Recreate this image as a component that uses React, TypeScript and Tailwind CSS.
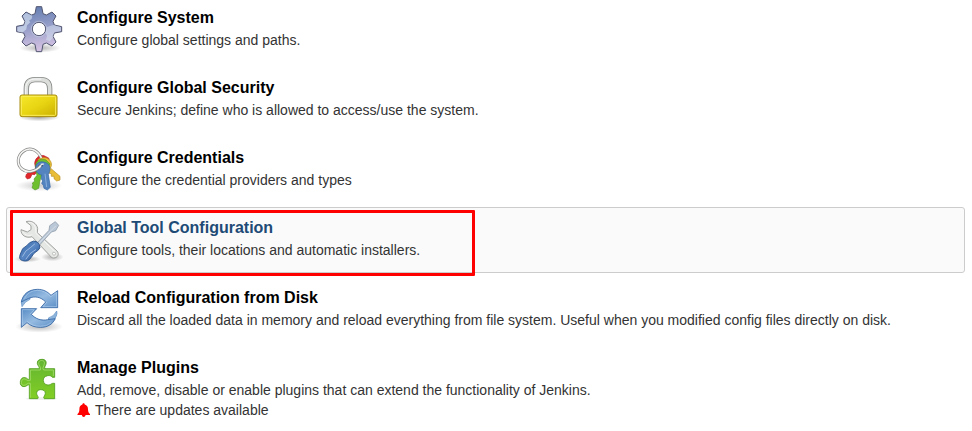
import type { ReactNode } from "react";

function GearIcon() {
  return (
    <svg viewBox="15 15 144 144" className="size-12 shrink-0">
      <defs>
        <linearGradient id="gear" x1="0" y1="0" x2="0.15" y2="1">
          <stop offset="0" stopColor="#5f7aae" />
          <stop offset="0.5" stopColor="#949dc8" />
          <stop offset="1" stopColor="#d3c1e2" />
        </linearGradient>
        <radialGradient id="gearShade">
          <stop offset="0" stopColor="#000" stopOpacity="0.3" />
          <stop offset="1" stopColor="#000" stopOpacity="0" />
        </radialGradient>
        <clipPath id="gearClip">
          <path d="M79 20H95L99 41L109 45L126 36L138 48L129 64L133 75L155 80V95L133 99L129 109L138 126L126 138L109 129L99 133L95 155H79L75 133L65 129L48 138L36 126L45 109L41 99L20 95V79L41 75L45 65L36 48L48 36L65 45L75 41Z" />
        </clipPath>
      </defs>
      <ellipse cx="90" cy="144" rx="62" ry="14" fill="url(#gearShade)" />
      <path fill="url(#gear)" stroke="#50546f" strokeWidth="3" strokeLinejoin="round" d="M79 20H95L99 41L109 45L126 36L138 48L129 64L133 75L155 80V95L133 99L129 109L138 126L126 138L109 129L99 133L95 155H79L75 133L65 129L48 138L36 126L45 109L41 99L20 95V79L41 75L45 65L36 48L48 36L65 45L75 41Z" />
      <g clipPath="url(#gearClip)" fill="#dce8f5">
        <path opacity=".6" d="M22 81L42 77L46 64L38 48L48 38L67 47L65 56L57 62L61 67L51 76L49 88L36 99L22 94Z" />
        <path opacity=".45" d="M111 81L133 74L153 82V93L133 97L128 114L119 124L108 119L111 108L106 96Z" />
      </g>
      <circle cx="87" cy="87" r="23" fill="none" stroke="#cbd3e5" strokeWidth="3" opacity=".6" />
      <circle cx="87" cy="87" r="20" fill="#fff" stroke="#555974" strokeWidth="3" />
    </svg>
  );
}

function LockIcon() {
  return (
    <svg viewBox="15 15 144 144" className="size-12 shrink-0">
      <defs>
        <linearGradient id="lock" x1="0" y1="0" x2="1" y2="1">
          <stop stopColor="#f6e92c" />
          <stop offset=".5" stopColor="#e8d412" />
          <stop offset="1" stopColor="#c9ae00" />
        </linearGradient>
        <radialGradient id="lockShade">
          <stop stopOpacity="0.35" />
          <stop offset="1" stopOpacity="0" />
        </radialGradient>
      </defs>
      <ellipse cx="87" cy="142" rx="62" ry="12" fill="url(#lockShade)" />
      <path d="M49 78V56C49 37 59 29 75 29H93C109 29 119 37 119 56V78" fill="none" stroke="#858885" strokeWidth="16" />
      <path d="M49 78V56C49 37 59 29 75 29H93C109 29 119 37 119 56V78" fill="none" stroke="#dcdedc" strokeWidth="11" />
      <path d="M47 78V56C47 37 59 27 75 27H94" fill="none" stroke="#fafafa" strokeWidth="3" />
      <rect x="30" y="75" width="111" height="65" rx="6" fill="url(#lock)" stroke="#a68c10" strokeWidth="3" />
      <rect x="34" y="79" width="103" height="57" rx="3" fill="none" stroke="#fbed5c" strokeWidth="3" />
    </svg>
  );
}

function KeysIcon() {
  return (
    <svg viewBox="15 15 144 144" className="size-12 shrink-0">
      <defs>
        <radialGradient id="keysShade">
          <stop stopOpacity="0.2" />
          <stop offset="1" stopOpacity="0" />
        </radialGradient>
      </defs>
      <ellipse cx="87" cy="137" rx="70" ry="17" fill="url(#keysShade)" />
      <g strokeWidth="2" strokeLinejoin="round">
        <path fill="#e0282c" stroke="#bb2027" d="M74 70C76 52 88 45 102 47L116 54L120 68L84 92L74 104L66 103L61 114L52 117L47 111L49 103L57 97L68 94L77 86Z" />
        <path fill="#e9bd37" stroke="#b99125" d="M84 59C94 50 109 51 118 59C126 67 126 77 121 84L150 109V120L140 123L132 116V109L124 109V101L115 99L99 84Z" />
        <path fill="#6fc02f" stroke="#56992a" d="M77 75C79 59 96 54 108 60L120 72L105 98L94 107L89 126L86 145L75 150L66 143L69 135L67 129L74 124L72 117L81 106L77 91Z" />
        <path fill="#5384c0" stroke="#3465a4" d="M77 82C78 69 89 64 101 66C114 68 120 77 120 88C119 98 116 101 115 103L121 142L112 150L102 145L100 136L95 130L98 123L94 117L95 105C83 103 76 94 77 82Z" />
        <path d="M105 101L110 141" fill="none" stroke="#89afdc" strokeWidth="3" />
      </g>
      <ellipse cx="92" cy="77" rx="8" ry="5" transform="rotate(-25 92 77)" fill="#38577f" />
      <path d="M94 54C84 31 61 20 43 32C19 47 21 74 36 87C52 101 78 94 92 77" fill="none" stroke="#858785" strokeWidth="9" />
      <path d="M94 54C84 31 61 20 43 32C19 47 21 74 36 87C52 101 78 94 92 77" fill="none" stroke="#f5f5f3" strokeWidth="5" />
      <path d="M86 84Q92 80 94 73L101 72" fill="none" stroke="#eee" strokeWidth="4" />
    </svg>
  );
}

function ToolsIcon() {
  return (
    <svg viewBox="45 45 144 144" className="size-12 shrink-0">
      <defs>
        <linearGradient id="handle" x1="0" y1="0" x2="1" y2="1">
          <stop stopColor="#3465a4" />
          <stop offset=".5" stopColor="#5987c4" />
          <stop offset="1" stopColor="#20498a" />
        </linearGradient>
        <radialGradient id="toolsShade">
          <stop stopOpacity="0.3" />
          <stop offset="1" stopOpacity="0" />
        </radialGradient>
      </defs>
      <ellipse cx="83" cy="177" rx="40" ry="10" fill="url(#toolsShade)" />
      <ellipse cx="157" cy="171" rx="34" ry="13" fill="url(#toolsShade)" />
      <path d="M78 65C95 60 110 70 113 85L112 98L171 153C179 162 173 174 161 174C155 174 150 168 147 164L96 110C79 116 62 106 63 89L82 96L93 89L93 77Z" fill="#e5e7e4" stroke="#a0a29f" strokeWidth="3" strokeLinejoin="round" />
      <path d="M86 67C100 66 108 78 108 100L167 157M67 95C77 108 88 108 97 104" fill="none" stroke="#f7f7f7" strokeWidth="3" />
      <circle cx="162" cy="161" r="4.5" fill="#fff" stroke="#a6a8a5" strokeWidth="2" />
      <path d="M111 129L147 91L149 77L166 65L176 76L167 92L154 96L118 136Z" fill="#bac7d6" stroke="#929eac" strokeWidth="2.5" strokeLinejoin="round" />
      <path d="M117 130L154 91L167 78" fill="none" stroke="#e2e9f0" strokeWidth="2" />
      <path d="M89 128Q102 119 112 126L118 134Q124 144 113 152L102 160L93 173Q84 187 68 182Q54 178 61 162L68 146L80 137Z" fill="url(#handle)" stroke="#294f87" strokeWidth="2.5" />
      <path d="M68 169L77 154L91 143L104 132M78 177L90 161L107 149" fill="none" stroke="#b5cdec" strokeWidth="3" strokeLinecap="round" opacity=".75" />
    </svg>
  );
}

function ReloadIcon() {
  return (
    <svg viewBox="15 15 144 144" className="size-12 shrink-0">
      <defs>
        <linearGradient id="reload" x1="0" y1="0" x2="1" y2="1">
          <stop stopColor="#558bc5" />
          <stop offset=".5" stopColor="#96bbe1" />
          <stop offset="1" stopColor="#5b8ec6" />
        </linearGradient>
        <radialGradient id="reloadShade">
          <stop stopOpacity="0.28" />
          <stop offset="1" stopOpacity="0" />
        </radialGradient>
      </defs>
      <ellipse cx="87" cy="140" rx="72" ry="18" fill="url(#reloadShade)" />
      <path d="M37 82C43 65 59 53 79 54L105 65L91 83L136 84L139 91C132 107 117 118 98 117L68 104L80 86Z" fill="#fff" />
      <path d="M36 80L34 67C37 53 46 42 60 38V58Q45 64 36 80ZM140 93Q133 109 115 114L119 128Q139 118 141 100Z" fill="#8db4dd" stroke="#5688be" strokeWidth="2" />
      <g fill="url(#reload)" strokeLinejoin="round" strokeWidth="2.5">
        <path stroke="#3465a4" d="M34 66C39 42 55 29 82 28C99 28 112 34 123 46L143 32V83H92L107 66C93 51 75 47 56 55Q43 61 34 66Z" />
        <path stroke="#3465a4" d="M136 116C127 134 112 142 91 142C74 142 61 137 51 128L34 142V86H80L64 103C77 117 94 123 113 119Z" />
      </g>
      <path d="M43 56Q55 32 82 31Q106 31 122 50L140 37V80H99L111 66M37 136V89H73L60 103M51 124Q67 139 91 139Q110 140 124 128" fill="none" stroke="#bdd8f1" strokeWidth="2" opacity=".8" />
    </svg>
  );
}

function PuzzleIcon() {
  return (
    <svg viewBox="15 15 144 144" className="size-12 shrink-0">
      <defs>
        <linearGradient id="puzzle" x1="0" y1="0" x2="0" y2="1">
          <stop stopColor="#62b432" />
          <stop offset="1" stopColor="#83ce25" />
        </linearGradient>
      </defs>
      <ellipse cx="94" cy="146" rx="47" ry="4" fill="#eee" />
      <path d="M58 56H86C91 51 82 47 82 40C81 31 88 28 96 28C105 28 110 33 108 42C107 48 102 51 105 56H134V82H127C123 77 119 76 113 77C103 79 99 85 100 92C101 102 109 106 117 105C123 104 125 98 134 100V146H103C98 143 105 137 106 130C106 122 99 119 92 119C84 119 79 124 80 131C81 138 88 142 83 146H58V105C52 102 51 110 42 110C33 110 30 103 31 95C32 86 38 81 46 83C52 84 53 90 58 88Z" fill="url(#puzzle)" stroke="#4f9c1d" strokeWidth="2.5" strokeLinejoin="round" />
      <path d="M61 143V100C53 97 49 106 42 106C33 106 34 98 35 93C38 84 46 86 51 91H61V60H91C94 51 86 47 86 40C86 31 94 31 98 32C106 34 103 42 101 48Q96 56 101 60H130V78" fill="none" stroke="#a4dc6b" strokeWidth="2.5" />
    </svg>
  );
}

function Entry({ icon, title, text, active, children }: { icon: ReactNode; title: string; text: string; active?: boolean; children?: ReactNode }) {
  return (
    <a className={`relative flex min-h-[66px] gap-[14px] rounded-[3px] border px-2 pt-[7px] ${active ? "border-[#cccccc] bg-[#fafafa]" : "border-transparent"}`}>
      {icon}
      <div className="pt-0.5">
        <h2 className={`text-[16px] font-bold leading-[22px] ${active ? "text-[#204a76]" : "text-black"}`}>{title}</h2>
        <p className="mt-px whitespace-nowrap text-[14px] leading-5">{text}</p>
        {children}
      </div>
      {active && <div className="absolute top-[2px] left-[3px] h-[66px] w-[465px] rounded-[1px] border-[3px] border-[#ff0000]" />}
    </a>
  );
}

export default function App() {
  return (
    <main className="h-[431px] overflow-hidden bg-white pr-[7px] pl-[6px] font-['Liberation_Sans',Arial,sans-serif] text-[#333333]">
      <div className="-mt-[3px] flex flex-col gap-1">
        <Entry icon={<GearIcon />} title="Configure System" text="Configure global settings and paths." />
        <Entry icon={<LockIcon />} title="Configure Global Security" text="Secure Jenkins; define who is allowed to access/use the system." />
        <Entry icon={<KeysIcon />} title="Configure Credentials" text="Configure the credential providers and types" />
        <Entry icon={<ToolsIcon />} title="Global Tool Configuration" text="Configure tools, their locations and automatic installers." active />
        <Entry icon={<ReloadIcon />} title="Reload Configuration from Disk" text="Discard all the loaded data in memory and reload everything from file system. Useful when you modified config files directly on disk." />
        <Entry icon={<PuzzleIcon />} title="Manage Plugins" text="Add, remove, disable or enable plugins that can extend the functionality of Jenkins.">
          <div className="flex items-center gap-1 text-[14px] leading-5">
            <svg viewBox="0 0 14 14" className="size-[14px] fill-[#ff0000]">
              <path d="M6.5 0.3C7.4 0.3 7.7 0.9 7.7 1.5C10 2 11 4 11 6.2C11 9 11.8 9.8 13 11V12H8.6C8.4 13.3 7.6 14 6.7 14S5 13.3 4.8 12H0.5V11C1.7 9.8 2.4 9 2.4 6.2C2.4 4 3.2 2 5.4 1.5C5.4 0.9 5.7 0.3 6.5 0.3Z" />
            </svg>
            <span>There are updates available</span>
          </div>
        </Entry>
      </div>
    </main>
  );
}
